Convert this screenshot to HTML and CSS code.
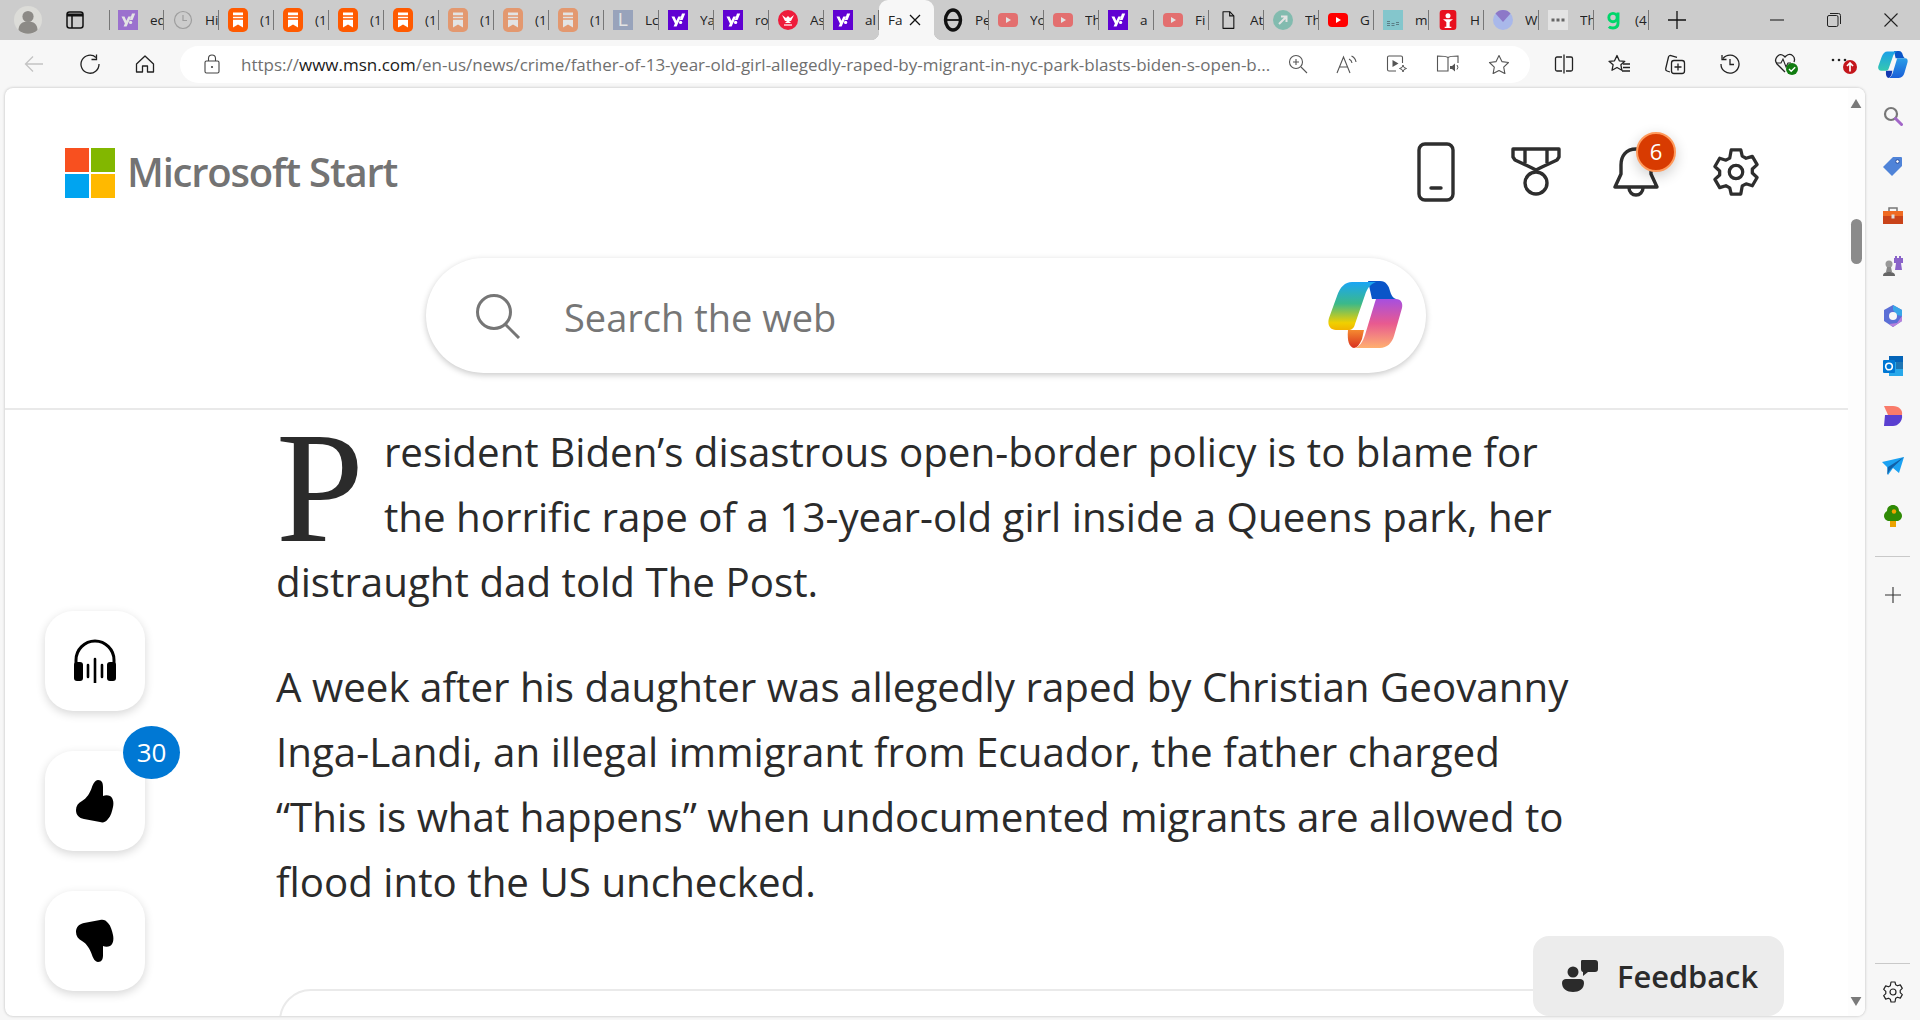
FILE: index.html
```html
<!DOCTYPE html>
<html lang="en">
<head>
<meta charset="utf-8">
<title>Microsoft Start</title>
<link rel="stylesheet" href="styles.css">
</head>
<body>
<svg class="defs" width="0" height="0" aria-hidden="true">
  <defs>
    <linearGradient id="cpl" x1="0" y1="0" x2="0" y2="1"><stop offset="0" stop-color="#1aa5f5"/><stop offset=".45" stop-color="#3bb98a"/><stop offset=".85" stop-color="#f0d000"/><stop offset="1" stop-color="#f2b400"/></linearGradient>
    <linearGradient id="cpr" x1="0" y1="0" x2="0" y2="1"><stop offset="0" stop-color="#a64fe0"/><stop offset=".5" stop-color="#e85a90"/><stop offset="1" stop-color="#ffb070"/></linearGradient>
    <linearGradient id="cpo" x1="0" y1="0" x2="0" y2="1"><stop offset="0" stop-color="#f58a30"/><stop offset="1" stop-color="#d9301f"/></linearGradient>
    <linearGradient id="bpl" x1="0" y1="0" x2="0" y2="1"><stop offset="0" stop-color="#1aa0e8"/><stop offset="1" stop-color="#35c8b0"/></linearGradient>
    <linearGradient id="bpr" x1="0" y1="0" x2="0" y2="1"><stop offset="0" stop-color="#2a9ee8"/><stop offset="1" stop-color="#1a5fd8"/></linearGradient>
  </defs>
  <symbol id="yahoo" viewBox="0 0 20 20"><rect width="20" height="20" fill="#6001d2"/><path d="M3.500 6.500h3l1.900 4.300 1.900-4.300h2.900l-4.600 10H5.600l1.300-2.900z" fill="#fff"/><path d="M14 3.500h3.200l-2.600 6.600h-2.800z" fill="#fff"/><circle cx="12.600" cy="12.400" r="1.600" fill="#fff"/></symbol>
  <symbol id="book" viewBox="0 0 20 24"><rect width="20" height="24" rx="5" fill="#ff5a00"/><path d="M5 4.500h10v15l-5-3-5 3z" fill="#fff"/><path d="M5 8h10M5 11h10" stroke="#ff5a00" stroke-width="1.300"/></symbol>
  <symbol id="yt" viewBox="0 0 20 14"><rect width="20" height="14" rx="4" fill="#f00"/><path d="M8 4l5 3-5 3z" fill="#fff"/></symbol>
</svg>

<header class="tabstrip">
  <div class="avatar"><svg viewBox="0 0 28 28" width="28" height="28"><circle cx="14" cy="14" r="14" fill="#dcdcd8"/><circle cx="14" cy="10.500" r="5.600" fill="#8c8a86"/><path d="M4.500 24c0-6 4-8.500 9.500-8.500s9.500 2.500 9.500 8.500a14 14 0 0 1-19 0z" fill="#8c8a86"/></svg></div>
  <div class="vtabs"><svg viewBox="0 0 18 18" width="18" height="18"><rect x="1" y="1" width="16" height="16" rx="2.500" fill="none" stroke="#111" stroke-width="1.500"/><path d="M1 2.500h16v3H1z" fill="#111"/><path d="M6 5v12" stroke="#111" stroke-width="1.500"/></svg></div>
  <div class="tabs">
    <div class="tab faded"><svg class="fav"><use href="#yahoo"/></svg><span class="tabtext">ed</span></div>
    <div class="tab faded"><svg class="fav" viewBox="0 0 20 20"><circle cx="10" cy="10" r="8.500" fill="none" stroke="#666" stroke-width="1.200"/><path d="M10 5v5.500h4" fill="none" stroke="#666" stroke-width="1.200"/></svg><span class="tabtext">Hi</span></div>
    <div class="tab"><svg class="fav book"><use href="#book"/></svg><span class="tabtext">(1</span></div>
    <div class="tab"><svg class="fav book"><use href="#book"/></svg><span class="tabtext">(1</span></div>
    <div class="tab"><svg class="fav book"><use href="#book"/></svg><span class="tabtext">(1</span></div>
    <div class="tab"><svg class="fav book"><use href="#book"/></svg><span class="tabtext">(1</span></div>
    <div class="tab faded"><svg class="fav book"><use href="#book"/></svg><span class="tabtext">(1</span></div>
    <div class="tab faded"><svg class="fav book"><use href="#book"/></svg><span class="tabtext">(1</span></div>
    <div class="tab faded"><svg class="fav book"><use href="#book"/></svg><span class="tabtext">(1</span></div>
    <div class="tab faded"><span class="fav letter">L</span><span class="tabtext">Lc</span></div>
    <div class="tab"><svg class="fav"><use href="#yahoo"/></svg><span class="tabtext">Ya</span></div>
    <div class="tab"><svg class="fav"><use href="#yahoo"/></svg><span class="tabtext">ro</span></div>
    <div class="tab"><svg class="fav" viewBox="0 0 20 20"><circle cx="10" cy="10" r="10" fill="#ee1c3b"/><path d="M4 5l4 3 2-2 2 2 4-3-3 6h-2l2 2H7l2-2H7z" fill="#fff"/><path d="M6 15h8" stroke="#fff" stroke-width="1.200"/></svg><span class="tabtext">As</span></div>
    <div class="tab"><svg class="fav"><use href="#yahoo"/></svg><span class="tabtext">al</span></div>
    <div class="tab active"><span class="tabtext">Fa</span><svg class="close" viewBox="0 0 12 12" width="12" height="12"><path d="M1 1l10 10M11 1L1 11" stroke="#111" stroke-width="1.300"/></svg></div>
    <div class="tab"><svg class="fav theta" viewBox="0 0 20 24"><ellipse cx="10" cy="12" rx="7.500" ry="10" fill="none" stroke="#111" stroke-width="3.400"/><path d="M3 12h14" stroke="#111" stroke-width="1.800"/></svg><span class="tabtext">Pe</span></div>
    <div class="tab faded"><svg class="fav yt"><use href="#yt"/></svg><span class="tabtext">Yo</span></div>
    <div class="tab faded"><svg class="fav yt"><use href="#yt"/></svg><span class="tabtext">Th</span></div>
    <div class="tab"><svg class="fav"><use href="#yahoo"/></svg><span class="tabtext">a</span></div>
    <div class="tab faded"><svg class="fav yt"><use href="#yt"/></svg><span class="tabtext">Fi</span></div>
    <div class="tab"><svg class="fav" viewBox="0 0 20 24"><path d="M4 2h8l5 5v15H4z" fill="none" stroke="#111" stroke-width="1.300" stroke-linejoin="round"/><path d="M12 2v5h5" fill="none" stroke="#111" stroke-width="1.300"/></svg><span class="tabtext">At</span></div>
    <div class="tab faded"><svg class="fav" viewBox="0 0 20 20"><circle cx="10" cy="10" r="10" fill="#2aa88c"/><path d="M6 14l7-7M8 6.500h5.500V12" fill="none" stroke="#fff" stroke-width="2"/></svg><span class="tabtext">Th</span></div>
    <div class="tab"><svg class="fav yt"><use href="#yt"/></svg><span class="tabtext">G</span></div>
    <div class="tab"><svg class="fav" viewBox="0 0 20 20"><rect width="20" height="20" fill="#84c6cc"/><path d="M4 11h3v1H4zM4 13h3v1H4zM4 15h3v1H4zM8.500 13h3v1h-3zM8.500 15h3v1h-3zM13 12h3v1h-3zM13 14h3v1h-3z" fill="#5a7d85"/></svg><span class="tabtext">m</span></div>
    <div class="tab"><svg class="fav" viewBox="0 0 20 24"><rect width="20" height="24" rx="3.500" fill="#e8101e"/><circle cx="10" cy="7" r="3" fill="#fff"/><path d="M4 11h12l-4 3.500V20h2v1.500H6V20h2v-5.500z" fill="#fff"/></svg><span class="tabtext">H</span></div>
    <div class="tab"><svg class="fav" viewBox="0 0 20 20"><circle cx="10" cy="10" r="10" fill="#a9b8ea"/><path d="M2.500 3.500A10 10 0 0 1 17.500 3.500L10 12z" fill="#8d78c8"/></svg><span class="tabtext">W</span></div>
    <div class="tab"><svg class="fav" viewBox="0 0 20 20"><rect width="20" height="20" fill="#e3e3e3"/><path d="M3.500 8.500h3v3h-3zM8.500 8.500h3v3h-3zM13.500 8.500h3v3h-3z" fill="#666"/></svg><span class="tabtext">Th</span></div>
    <div class="tab"><svg class="fav" viewBox="0 0 20 24"><path d="M16 3v13c0 3.500-2.500 5.500-6 5.500-2 0-4-.5-5-1.500" fill="none" stroke="#00d66b" stroke-width="3.500"/><circle cx="10" cy="9" r="5" fill="none" stroke="#00d66b" stroke-width="3.500"/></svg><span class="tabtext">(4</span></div>
  </div>
  <div class="newtab"><svg viewBox="0 0 18 18" width="18" height="18"><path d="M9 0v18M0 9h18" stroke="#111" stroke-width="1.300"/></svg></div>
  <div class="winctl">
    <svg viewBox="0 0 14 14" width="14" height="14"><path d="M0 7h14" stroke="#222" stroke-width="1.100"/></svg>
    <svg viewBox="0 0 14 14" width="14" height="14"><rect x=".5" y="2.500" width="10.500" height="11" rx="1.500" fill="none" stroke="#222"/><path d="M3 .5h8.500a2 2 0 0 1 2 2V11" fill="none" stroke="#222"/></svg>
    <svg viewBox="0 0 14 14" width="14" height="14"><path d="M.5.5l13 13M13.500.5l-13 13" stroke="#222" stroke-width="1.100"/></svg>
  </div>
</header>

<nav class="toolbar">
  <div class="navbtns">
    <svg viewBox="0 0 20 20" width="20" height="20"><path d="M19 10H1.500M9 2.500L1.500 10 9 17.500" fill="none" stroke="#c4c4c4" stroke-width="1.300"/></svg>
    <svg viewBox="0 0 20 20" width="20" height="20"><path d="M16 3.500A9 9 0 1 0 19 10" fill="none" stroke="#222" stroke-width="1.300"/><path d="M16.500 .5v5h-5" fill="none" stroke="#222" stroke-width="1.300"/></svg>
    <svg viewBox="0 0 20 20" width="20" height="20"><path d="M1.500 10L10 2l8.500 8v8h-6v-6h-5v6h-6z" fill="none" stroke="#222" stroke-width="1.300" stroke-linejoin="round"/></svg>
  </div>
  <div class="omnibox">
    <svg class="lock" viewBox="0 0 16 20" width="16" height="20"><rect x="1" y="7" width="14" height="12" rx="1.500" fill="none" stroke="#444" stroke-width="1.100"/><path d="M4.500 7V4.500a3.500 3.500 0 0 1 7 0V7" fill="none" stroke="#444" stroke-width="1.100"/><circle cx="8" cy="13" r="1.100" fill="#444"/></svg>
    <span class="url">https://<b>www.msn.com</b>/en-us/news/crime/father-of-13-year-old-girl-allegedly-raped-by-migrant-in-nyc-park-blasts-biden-s-open-b...</span>
    <div class="omni-icons">
      <svg viewBox="0 0 20 20" width="20" height="20"><circle cx="8" cy="8" r="6.500" fill="none" stroke="#555" stroke-width="1.100"/><path d="M13 13l6 6M5 8h6M8 5v6" stroke="#555" stroke-width="1.100"/></svg>
      <svg viewBox="0 0 22 20" width="22" height="20"><path d="M1 19L7.500 3 14 19M3.500 13h8" fill="none" stroke="#555" stroke-width="1.100"/><path d="M13 5a5 5 0 0 1 3 4M15.500 2a8 8 0 0 1 4.500 6" fill="none" stroke="#555" stroke-width="1.100"/></svg>
      <svg viewBox="0 0 22 20" width="22" height="20"><path d="M10 17H3a1.500 1.500 0 0 1-1.500-1.500v-12A1.500 1.500 0 0 1 3 2h12a1.500 1.500 0 0 1 1.500 1.500V9" fill="none" stroke="#555" stroke-width="1.100"/><path d="M6.500 6l6 3.500-6 3.500z" fill="#555"/><path d="M17 11l1 2.500 2.500 1-2.500 1-1 2.500-1-2.500-2.500-1 2.500-1z" fill="none" stroke="#555"/></svg>
      <svg viewBox="0 0 24 20" width="24" height="20"><path d="M12 3.500C10 2 6 2 1.500 2v15H12V3.500c2-1.500 6-1.500 10-1.500v7M12 17h-1" fill="none" stroke="#555" stroke-width="1.100"/><path d="M14 12h2l3-2.500v8L16 15h-2z" fill="#555"/><path d="M21 11a3.500 3.500 0 0 1 0 4.500" fill="none" stroke="#555"/></svg>
      <svg viewBox="0 0 22 20" width="22" height="20"><path d="M11 1.500l2.900 6.100 6.600.9-4.800 4.600 1.200 6.500L11 16.500l-5.900 3.100 1.200-6.500L1.500 8.500l6.600-.9z" fill="none" stroke="#555" stroke-width="1.100" stroke-linejoin="round"/></svg>
    </div>
  </div>
  <div class="tools">
    <svg viewBox="0 0 20 20" width="20" height="20"><path d="M8 3H3a1.500 1.500 0 0 0-1.500 1.500v11A1.500 1.500 0 0 0 3 17h5M12 3h5a1.500 1.500 0 0 1 1.500 1.500v11A1.500 1.500 0 0 1 17 17h-5M10 .5v19" fill="none" stroke="#222" stroke-width="1.300"/></svg>
    <svg viewBox="0 0 22 20" width="22" height="20"><path d="M9 1.500l2.300 5.300 5.500.5-3.900 3.500 1 5.500-4.900-2.800-5 2.800 1.100-5.500L1 7.300l5.500-.5z" fill="none" stroke="#222" stroke-width="1.300" stroke-linejoin="round"/><path d="M15 10h7M15 13.500h7M14 17h8" stroke="#222" stroke-width="1.300"/></svg>
    <svg viewBox="0 0 22 22" width="22" height="22"><path d="M6 19l-3-1a2 2 0 0 1-1.300-2.300L4.500 4a2 2 0 0 1 2.500-1.400l6 1.700" fill="none" stroke="#222" stroke-width="1.300"/><rect x="7.500" y="7.500" width="13" height="13" rx="2.500" fill="#f7f7f7" stroke="#222" stroke-width="1.300"/><path d="M14 10.500v7M10.500 14h7" stroke="#222" stroke-width="1.300"/></svg>
    <svg viewBox="0 0 20 20" width="20" height="20"><path d="M3 4.500A9 9 0 1 1 1 10" fill="none" stroke="#222" stroke-width="1.300"/><path d="M2 1v4.500h4.500M10 5v5.500h4" fill="none" stroke="#222" stroke-width="1.300"/></svg>
    <span class="heart"><svg viewBox="0 0 26 24" width="26" height="24"><path d="M11 20L3 12C-1 7 5 0 10 4l1 1 1-1c5-4 10 1 8 6" fill="none" stroke="#222" stroke-width="1.300"/><path d="M2 11h5l2-4 3 8 2-4h3" fill="none" stroke="#222" stroke-width="1.100"/><circle cx="18" cy="17" r="6" fill="#107c10"/><path d="M15 17l2.200 2.200 4-4" fill="none" stroke="#fff" stroke-width="1.400"/></svg></span>
    <span class="more"><svg viewBox="0 0 28 22" width="28" height="22"><circle cx="3" cy="7" r="1.300" fill="#222"/><circle cx="9" cy="7" r="1.300" fill="#222"/><circle cx="15" cy="7" r="1.300" fill="#222"/><circle cx="20" cy="14" r="7" fill="#c4161c"/><path d="M20 18.500v-8M17 13l3-3 3 3" fill="none" stroke="#fff" stroke-width="1.700"/></svg></span>
  </div>
  <svg class="copilot-small" viewBox="0 0 75 67" width="30" height="27">
    <path d="M40 0H52C58 0 61 5 62 10C63 14 65 17 68 18H44Z" fill="#0a55c8"/>
    <path d="M20 49H36L34 58C32 63 29 67 26 67C21 66 19 60 20 49Z" fill="#1238b0"/>
    <path d="M24 1H48C42 3 39 8 37 14L27 43C26 47 24 49 20 49H8C2 49-1 44 1 37L9 15C12 6 17 1 24 1Z" fill="url(#bpl)"/>
    <path d="M48 18H68C73 18 75 22 74 27L66 55C64 62 59 67 52 67H26C32 66 35 60 37 54L47 21Z" fill="url(#bpr)"/>
  </svg>
</nav>

<div class="workspace">
  <main class="page">
    <div class="site-head">
      <div class="brand">
        <svg class="mslogo" viewBox="0 0 50 50" width="50" height="50"><rect width="24" height="24" fill="#f8501f"/><rect x="26" width="24" height="24" fill="#82b700"/><rect y="26" width="24" height="24" fill="#00a4f0"/><rect x="26" y="26" width="24" height="24" fill="#ffb900"/></svg>
        <span class="brand-name">Microsoft Start</span>
      </div>
      <div class="head-icons">
        <span class="head-cell"><svg viewBox="0 0 38 60" width="38" height="60"><rect x="2" y="2" width="34" height="56" rx="6" fill="none" stroke="#2e2e2e" stroke-width="3.400"/><path d="M14 46h10" stroke="#2e2e2e" stroke-width="3.400" stroke-linecap="round"/></svg></span>
        <span class="head-cell"><svg viewBox="0 0 50 50" width="50" height="50"><path d="M2 2h46v8l-2 3-15 7-6 3-6-3-15-7-2-3z" fill="none" stroke="#2e2e2e" stroke-width="3.400" stroke-linejoin="round"/><path d="M14 3v13M36 3v13" stroke="#2e2e2e" stroke-width="3.400"/><circle cx="25" cy="36" r="11" fill="#fff" stroke="#2e2e2e" stroke-width="3.400"/></svg></span>
        <span class="head-cell bell">
          <svg viewBox="0 0 46 50" width="46" height="50"><path d="M23 2C13 2 8 9 8 18v9L2 40h42l-6-13V18C38 9 33 2 23 2z" fill="none" stroke="#2e2e2e" stroke-width="3.400" stroke-linejoin="round"/><path d="M16 41a7 7 0 0 0 14 0" fill="none" stroke="#2e2e2e" stroke-width="3.400"/></svg>
          <span class="bell-count">6</span>
        </span>
        <span class="head-cell"><svg viewBox="0 0 50 50" width="48" height="50"><path d="M20 2h10l1.500 6.500 4 2.200 6.500-2 5 8.600-5 4.600v4.200l5 4.600-5 8.600-6.500-2-4 2.200L30 48H20l-1.500-6.500-4-2.200-6.500 2-5-8.600 5-4.600v-4.200l-5-4.600 5-8.600 6.500 2 4-2.200z" fill="none" stroke="#2e2e2e" stroke-width="3.400" stroke-linejoin="round"/><circle cx="25" cy="25" r="7" fill="none" stroke="#2e2e2e" stroke-width="3.400"/></svg></span>
      </div>
    </div>
    <div class="search-row">
      <div class="searchbox">
        <svg class="search-ic" viewBox="0 0 46 46" width="46" height="46"><circle cx="19" cy="19" r="16.500" fill="none" stroke="#767676" stroke-width="3"/><path d="M30 31l14 14" stroke="#767676" stroke-width="3"/></svg>
        <span class="search-text">Search the web</span>
        <svg class="copilot" viewBox="0 0 75 67" width="75" height="67">
          <path d="M40 0H52C58 0 61 5 62 10C63 14 65 17 68 18H44Z" fill="#0a55c8"/>
          <path d="M20 49H36L34 58C32 63 29 67 26 67C21 66 19 60 20 49Z" fill="url(#cpo)"/>
          <path d="M24 1H48C42 3 39 8 37 14L27 43C26 47 24 49 20 49H8C2 49-1 44 1 37L9 15C12 6 17 1 24 1Z" fill="url(#cpl)"/>
          <path d="M48 18H68C73 18 75 22 74 27L66 55C64 62 59 67 52 67H26C32 66 35 60 37 54L47 21Z" fill="url(#cpr)"/>
        </svg>
      </div>
    </div>
    <article class="article">
      <p><span class="dropcap">P</span>resident Biden’s disastrous open-border policy is to blame for the horrific rape of a 13-year-old girl inside a Queens park, her distraught dad told The Post.</p>
      <p>A week after his daughter was allegedly raped by Christian Geovanny Inga-Landi, an illegal immigrant from Ecuador, the father charged “This is what happens” when undocumented migrants are allowed to flood into the US unchecked.</p>
      <div class="embed"></div>
    </article>

    <aside class="rail">
      <div class="railbtn"><svg viewBox="0 0 44 44" width="44" height="44"><path d="M3 26V21a19 19 0 0 1 38 0v5" fill="none" stroke="#000" stroke-width="3"/><rect x="1" y="23" width="9" height="19" rx="3" fill="#000"/><rect x="34" y="23" width="9" height="19" rx="3" fill="#000"/><path d="M22 20v24M15 26v12M29 26v12" stroke="#000" stroke-width="2.600" stroke-linecap="round"/></svg></div>
      <div class="railbtn likebtn">
        <svg viewBox="0 0 38 44" width="38" height="44"><path d="M22 1c4 0 5 3 5 7v9c2-1 5-1 7 0 3 2 4 6 3 11-1 4-2 9-5 12-2 3-5 4-8 3L8 40c-5-1-8-4-8-9 0-4 2-7 6-9 5-3 8-8 10-14 1-3 3-7 6-7z" fill="#000"/></svg>
        <span class="like-count">30</span>
      </div>
      <div class="railbtn"><svg viewBox="0 0 38 44" width="38" height="44"><path d="M22 43c4 0 5-3 5-7v-9c2 1 5 1 7 0 3-2 4-6 3-11-1-4-2-9-5-12-2-3-5-4-8-3L8 4C3 5 0 8 0 13c0 4 2 7 6 9 5 3 8 8 10 14 1 3 3 7 6 7z" fill="#000"/></svg></div>
    </aside>

    <div class="feedback">
      <svg viewBox="0 0 36 32" width="36" height="32"><circle cx="11" cy="12" r="5.500" fill="#2b2b2b"/><path d="M0 23c0-3 2-4 4-4h14c2 0 4 1 4 4 0 6-5 9-11 9S0 29 0 23z" fill="#2b2b2b"/><path d="M20 0h13c2 0 3 1 3 3v6c0 2-1 3-3 3h-7l-5 4v-4c-1 0-2-1-2-3V2c0-1 0-2 1-2z" fill="#2b2b2b"/></svg>
      <span>Feedback</span>
    </div>

    <div class="scrollbar">
      <svg viewBox="0 0 12 10" width="12" height="9"><path d="M6 0l6 10H0z" fill="#7a7a7a"/></svg>
      <span class="thumb"></span>
      <svg class="sb-down" viewBox="0 0 12 10" width="12" height="9"><path d="M6 10L0 0h12z" fill="#7a7a7a"/></svg>
    </div>
  </main>

  <aside class="sidebar">
    <div class="side-icons">
      <svg viewBox="0 0 20 20" width="20" height="20"><circle cx="8" cy="8" r="6" fill="none" stroke="#777" stroke-width="2.200"/><path d="M12.500 12.500l6 6" stroke="#a266c8" stroke-width="3" stroke-linecap="round"/></svg>
      <svg viewBox="0 0 20 20" width="20" height="20"><path d="M10 1h8a1 1 0 0 1 1 1v8L9 20 0 11z" fill="#4f83d8"/><circle cx="14.500" cy="5.500" r="1.800" fill="#fff" stroke="#2b4f9e"/></svg>
      <svg viewBox="0 0 22 20" width="22" height="20"><path d="M7 5V2h8v3" fill="none" stroke="#777" stroke-width="1.500"/><path d="M1 5h20v5H1z" fill="#ef6a22"/><path d="M1 10h20v8H1z" fill="#c9431a"/><rect x="9.500" y="8.500" width="3" height="4" fill="#ddd"/></svg>
      <svg viewBox="0 0 22 22" width="22" height="22"><path d="M13 1h2v2h2V1h2v2h2v5h-2l1 7h-7l1-7h-2V3h1z" fill="#8a63c9"/><circle cx="7" cy="9" r="3.500" fill="#999"/><path d="M5 12h4l1 5H4z" fill="#888"/><path d="M1 21c0-3 2-4 6-4s6 1 6 4z" fill="#666"/></svg>
      <svg viewBox="0 0 20 22" width="20" height="22"><path d="M10 0l9 5v11l-9 6-9-6V5z" fill="#5b6fd6"/><path d="M10 0l9 5v6l-5-1-4-5z" fill="#38a7e8"/><path d="M19 11v5l-9 6-4-3 8-1z" fill="#b77fdc"/><circle cx="10" cy="11" r="4" fill="#f7f7f7"/></svg>
      <svg viewBox="0 0 20 20" width="20" height="20"><path d="M6 0h14v20H6z" fill="#28a8ea"/><path d="M6 0h14v6H6z" fill="#0364b8"/><path d="M13 6h7v7h-7z" fill="#14447d" opacity=".5"/><rect y="4" width="12" height="13" rx="1" fill="#0078d4"/><circle cx="6" cy="10.500" r="3.300" fill="none" stroke="#fff" stroke-width="1.600"/></svg>
      <svg viewBox="0 0 20 22" width="20" height="22"><path d="M1 1h9c6 0 10 4 9 9H5z" fill="#f97b6a"/><path d="M2 10h17c1 6-4 11-9 11H1z" fill="#5a3fd0"/></svg>
      <svg viewBox="0 0 22 18" width="22" height="18"><path d="M0 5l22-5-5 16-6-5-5 7-1-8z" fill="#1ba1f2"/><path d="M22 0L6 10l-1 8 3-5z" fill="#1160a8"/></svg>
      <svg viewBox="0 0 18 22" width="18" height="22"><path d="M9 0c4 0 6 3 6 6 2 1 3 3 3 5 0 3-3 5-5 5H5c-2 0-5-2-5-5 0-2 1-4 3-5 0-3 2-6 6-6z" fill="#2f8a05"/><rect x="6" y="16" width="6" height="6" fill="#eba300"/><circle cx="10" cy="6.500" r="2.200" fill="#f0a400"/></svg>
    </div>
    <span class="side-rule"></span>
    <svg class="side-plus" viewBox="0 0 16 16" width="16" height="16"><path d="M8 0v16M0 8h16" stroke="#333" stroke-width="1.100"/></svg>
    <span class="side-fill"></span>
    <span class="side-rule low"></span>
    <svg class="side-gear" viewBox="0 0 22 22" width="22" height="22"><path d="M9 1h4l.7 2.800 1.800 1 2.800-.9 2 3.500-2.100 2v2.200l2.100 2-2 3.500-2.800-.9-1.800 1L13 21H9l-.7-2.800-1.800-1-2.800.9-2-3.500 2.100-2V10.400l-2.100-2 2-3.500 2.800.9 1.800-1z" fill="none" stroke="#222" stroke-width="1.200" stroke-linejoin="round"/><circle cx="11" cy="11" r="3" fill="none" stroke="#222" stroke-width="1.200"/></svg>
  </aside>
</div>
</body>
</html>
```

FILE: styles.css
```css
* { box-sizing: border-box; }
html, body { margin: 0; height: 1020px; overflow: hidden; }
body {
  display: flex;
  flex-direction: column;
  background: #f7f7f7;
  font-family: "Open Sans", "Noto Sans", sans-serif;
  color: #2b2b2b;
}
.defs { position: absolute; }

/* tab strip */
.tabstrip {
  flex: none;
  height: 40px;
  background: #cccccc;
  display: flex;
  align-items: center;
}
.avatar { width: 28px; height: 28px; margin-left: 14px; }
.avatar svg { display: block; }
.vtabs { width: 18px; height: 18px; margin-left: 24px; margin-right: 25px; }
.vtabs svg { display: block; }
.tabs { display: flex; height: 40px; align-items: center; position: relative; }
.tabs::before { content: ""; position: absolute; left: 0; top: 10px; height: 20px; width: 1px; background: #777; }
.tab {
  width: 55px;
  height: 40px;
  padding-left: 9px;
  display: flex;
  align-items: center;
  gap: 12px;
  font-size: 13.5px;
  color: #222;
  position: relative;
  overflow: hidden;
}
.tab::after { content: ""; position: absolute; right: 0; top: 10px; height: 20px; width: 1px; background: #777; }
.fav { width: 20px; height: 20px; flex: none; display: block; }
.tab.faded .fav { opacity: .45; }
.fav.book { height: 24px; }
.fav.yt { height: 14px; }
.fav.theta { height: 24px; }
.letter {
  background: #5b73a8;
  color: #fff;
  font: 18px/20px "Liberation Sans", sans-serif;
  text-align: center;
}
.tabtext { white-space: nowrap; flex: none; width: 14px; overflow: hidden; }
.tab.active {
  background: #f7f7f7;
  border-radius: 9px 9px 0 0;
  padding-left: 9px;
  gap: 7px;
  overflow: visible;
}
.tab.active::before,
.tab.active::after {
  content: "";
  display: block;
  position: absolute;
  bottom: 0;
  top: auto;
  width: 8px;
  height: 8px;
  background: radial-gradient(circle at 0 0, transparent 8px, #f7f7f7 8.5px);
}
.tab.active::before { left: -8px; }
.tab.active::after { left: auto; right: -8px; background: radial-gradient(circle at 100% 0, transparent 8px, #f7f7f7 8.5px); }
.newtab { margin-left: 19px; width: 18px; height: 18px; }
.newtab svg { display: block; }
.winctl { margin-left: auto; display: flex; gap: 43px; padding-right: 22px; }
.winctl svg { display: block; }

/* toolbar */
.toolbar {
  flex: none;
  height: 48px;
  display: flex;
  align-items: center;
  padding-left: 24px;
}
.navbtns { display: flex; gap: 35.5px; width: 156px; align-items: center; }
.navbtns svg { display: block; flex: none; }
.omnibox {
  width: 1350px;
  height: 37px;
  flex: none;
  background: #fff;
  border-radius: 19px;
  display: flex;
  align-items: center;
  padding-left: 24px;
}
.lock { flex: none; }
.url {
  margin-left: 21px;
  width: 1032px;
  flex: none;
  font: 17px "Open Sans", sans-serif;
  color: #6f6f6f;
  white-space: nowrap;
  overflow: hidden;
}
.url b { font-weight: 400; color: #1a1a1a; }
.omni-icons { display: flex; margin-left: 15px; gap: 28px; align-items: center; }
.omni-icons svg { display: block; flex: none; }
.tools { display: flex; align-items: center; gap: 34px; margin-left: 24px; width: 324px; flex: none; }
.tools svg { display: block; flex: none; }
.more { margin-left: -4px; }
.copilot-small { flex: none; }

/* page */
.workspace { flex: 1; display: flex; min-height: 0; }
.page {
  position: relative;
  margin-left: 5px;
  width: 1860px;
  height: 928px;
  flex: none;
  background: #fff;
  border-radius: 8px;
  box-shadow: 0 0 3px rgba(0,0,0,.25);
  overflow: hidden;
}
.site-head {
  height: 170px;
  display: flex;
  justify-content: space-between;
  padding: 60px 79px 0 60px;
}
.brand { display: flex; align-items: center; gap: 12px; height: 50px; }
.mslogo { display: block; }
.brand-name {
  font: 600 40px/50px "Open Sans", sans-serif;
  letter-spacing: -1.2px;
  color: #737373;
  margin-top: -2px;
}
.head-icons { display: flex; align-items: center; height: 50px; margin-top: -1px; }
.head-cell { width: 100px; height: 60px; display: flex; align-items: center; justify-content: center; }
.head-cell svg { display: block; flex: none; }
.bell { position: relative; }
.bell-count {
  position: absolute;
  left: 50px;
  top: -10px;
  width: 40px;
  height: 40px;
  border-radius: 50%;
  background: #d83b01;
  border: 2px solid #ff9a5c;
  color: #fff;
  font-size: 22px;
  line-height: 35px;
  text-align: center;
  box-shadow: 0 4px 14px rgba(0,0,0,.2);
}
.search-row {
  height: 152px;
  padding-left: 421px;
  border-bottom: 2px solid #e9e9e9;
}
.searchbox {
  width: 1000px;
  height: 115px;
  border-radius: 58px;
  background: #fff;
  box-shadow: 0 2px 6px rgba(0,0,0,.22);
  display: flex;
  align-items: center;
  padding-left: 49px;
}
.search-ic { flex: none; }
.search-text {
  margin-left: 43px;
  font-size: 38px;
  line-height: 52px;
  padding-top: 2px;
  color: #767676;
  width: 764px;
  flex: none;
}
.copilot { flex: none; margin-top: -2px; }

/* article */
.article { margin-left: 271px; width: 1300px; padding-top: 9px; }
.article p {
  margin: 0 0 40px;
  font-size: 40.3px;
  line-height: 65px;
  color: #2b2b2b;
}
.dropcap {
  float: left;
  font: 158px/110px "Liberation Serif", serif;
  height: 125px;
  padding-top: 14px;
  margin-right: 20px;
  color: #2b2b2b;
}
.embed {
  margin-top: 75px;
  margin-left: 3px;
  height: 100px;
  width: 1400px;
  border: 2px solid #eaeaea;
  border-radius: 32px 0 0 0;
}

/* floating */
.rail { position: absolute; left: 40px; top: 523px; display: flex; flex-direction: column; gap: 40px; }
.railbtn {
  position: relative;
  width: 100px;
  height: 100px;
  border-radius: 28px;
  background: #fff;
  box-shadow: 0 3px 10px rgba(0,0,0,.16);
  display: flex;
  align-items: center;
  justify-content: center;
}
.like-count {
  position: absolute;
  left: 78px;
  top: -25px;
  width: 57px;
  height: 53px;
  border-radius: 50%;
  background: #0078d4;
  color: #fff;
  font-size: 26px;
  line-height: 53px;
  text-align: center;
}
.feedback {
  position: absolute;
  left: 1528px;
  bottom: 0;
  width: 251px;
  height: 80px;
  background: #ececec;
  border-radius: 16px;
  display: flex;
  align-items: center;
  padding-left: 29px;
  gap: 19px;
  font-size: 30.8px;
  font-weight: 600;
  color: #2b2b2b;
}
.scrollbar {
  position: absolute;
  right: 0;
  top: 0;
  width: 17px;
  height: 928px;
  background: #fdfdfd;
  display: flex;
  flex-direction: column;
  align-items: center;
  padding: 11px 1px 10px 0;
}
.scrollbar svg { display: block; flex: none; }
.thumb { width: 11px; height: 45px; border-radius: 6px; background: #8b8b8b; margin-top: 111px; }
.sb-down { margin-top: auto; }

/* sidebar */
.sidebar {
  flex: 1;
  display: flex;
  flex-direction: column;
  align-items: center;
  padding: 3px 0 17px;
}
.sidebar svg { display: block; flex: none; }
.side-icons { display: grid; grid-auto-rows: 50px; place-items: center; }
.side-rule { width: 35px; height: 1px; background: #c9c9c9; flex: none; margin-top: 15px; }
.side-plus { margin-top: 30px; }
.side-fill { flex: 1; }
.side-rule.low { margin-top: 0; margin-bottom: 17px; }
```
